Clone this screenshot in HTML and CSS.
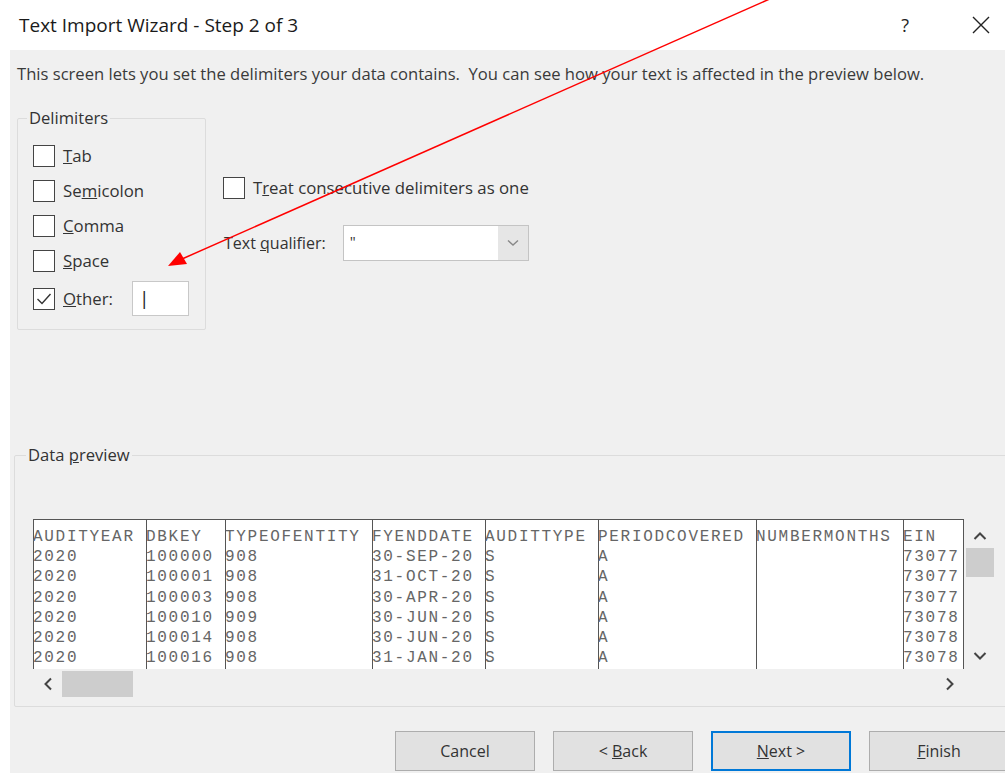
FILE: index.html
```html
<!DOCTYPE html>
<html lang="en">
<head>
<meta charset="utf-8">
<title>Text Import Wizard - Step 2 of 3</title>
<link rel="stylesheet" href="styles.css">
</head>
<body>
<div class="window">
  <header class="titlebar">
    <h1 class="title">Text Import Wizard - Step 2 of 3</h1>
    <div class="caption-buttons">
      <span class="help">?</span>
      <svg class="close" width="18" height="18" viewBox="0 0 18 18"><path d="M1 1 L17 17 M17 1 L1 17" stroke="#222" stroke-width="1.4" fill="none"/></svg>
    </div>
  </header>

  <main class="panel">
    <p class="intro">This screen lets you set the delimiters your data contains.&nbsp; You can see how your text is affected in the preview below.</p>

    <div class="options">
      <fieldset class="group delimiters">
        <legend>Delimiters</legend>
        <div class="check-list">
          <div class="check"><span class="box"></span><span><u>T</u>ab</span></div>
          <div class="check"><span class="box"></span><span>Se<u>m</u>icolon</span></div>
          <div class="check"><span class="box"></span><span><u>C</u>omma</span></div>
          <div class="check"><span class="box"></span><span><u>S</u>pace</span></div>
          <div class="check other">
            <span class="box"><svg width="20" height="20" viewBox="0 0 20 20"><path d="M3.5 10 L8 14.5 L16.5 5" stroke="#333" stroke-width="1.4" fill="none"/></svg></span>
            <span><u>O</u>ther:</span>
            <span class="textbox">|</span>
          </div>
        </div>
      </fieldset>

      <div class="side-options">
        <div class="check"><span class="box"></span><span>T<u>r</u>eat consecutive delimiters as one</span></div>
        <div class="qualifier">
          <span>Text <u>q</u>ualifier:</span>
          <div class="combo">
            <span class="combo-value">"</span>
            <span class="combo-drop"><svg width="12" height="8" viewBox="0 0 12 8"><path d="M1 1.5 L6 6 L11 1.5" stroke="#888" stroke-width="1.4" fill="none"/></svg></span>
          </div>
        </div>
      </div>
    </div>

    <fieldset class="group preview">
      <legend>Data <u>p</u>review</legend>
      <div class="preview-body">
        <div class="grid-row">
          <div class="grid">
            <div class="col" style="width:113px"><span>AUDITYEAR</span><span>2020</span><span>2020</span><span>2020</span><span>2020</span><span>2020</span><span>2020</span></div>
            <div class="col" style="width:79px"><span>DBKEY</span><span>100000</span><span>100001</span><span>100003</span><span>100010</span><span>100014</span><span>100016</span></div>
            <div class="col" style="width:147px"><span>TYPEOFENTITY</span><span>908</span><span>908</span><span>908</span><span>909</span><span>908</span><span>908</span></div>
            <div class="col" style="width:113px"><span>FYENDDATE</span><span>30-SEP-20</span><span>31-OCT-20</span><span>30-APR-20</span><span>30-JUN-20</span><span>30-JUN-20</span><span>31-JAN-20</span></div>
            <div class="col" style="width:113px"><span>AUDITTYPE</span><span>S</span><span>S</span><span>S</span><span>S</span><span>S</span><span>S</span></div>
            <div class="col" style="width:158px"><span>PERIODCOVERED</span><span>A</span><span>A</span><span>A</span><span>A</span><span>A</span><span>A</span></div>
            <div class="col" style="width:147px"><span>NUMBERMONTHS</span><span></span><span></span><span></span><span></span><span></span><span></span></div>
            <div class="col" style="width:60px"><span>EIN</span><span>73077</span><span>73077</span><span>73077</span><span>73078</span><span>73078</span><span>73078</span></div>
            <div class="col" style="width:60px"><span></span></div>
          </div>
          <div class="vscroll">
            <svg width="14" height="10" viewBox="0 0 14 10"><path d="M1.5 8 L7 2.5 L12.5 8" stroke="#444" stroke-width="2" fill="none"/></svg>
            <span class="vthumb"></span>
            <span class="vspace"></span>
            <svg width="14" height="10" viewBox="0 0 14 10"><path d="M1.5 2 L7 7.5 L12.5 2" stroke="#444" stroke-width="2" fill="none"/></svg>
          </div>
        </div>
        <div class="hscroll">
          <span class="harrow"><svg width="10" height="14" viewBox="0 0 10 14"><path d="M8 1.5 L2.5 7 L8 12.5" stroke="#444" stroke-width="2" fill="none"/></svg></span>
          <span class="hthumb"></span>
          <span class="hspace"></span>
          <span class="harrow"><svg width="10" height="14" viewBox="0 0 10 14"><path d="M2 1.5 L7.5 7 L2 12.5" stroke="#444" stroke-width="2" fill="none"/></svg></span>
        </div>
      </div>
    </fieldset>

    <div class="buttons">
      <button class="btn">Cancel</button>
      <button class="btn">&lt; <u>B</u>ack</button>
      <button class="btn default"><u>N</u>ext &gt;</button>
      <button class="btn"><u>F</u>inish</button>
    </div>
  </main>

  <svg class="callout" width="1005" height="773" viewBox="0 0 1005 773">
    <line x1="790" y1="-10" x2="182" y2="259" stroke="#ff0000" stroke-width="1.5"/>
    <polygon points="168,266 187,264 180,252" fill="#ff0000"/>
  </svg>
</div>
</body>
</html>
```

FILE: styles.css
```css
* { box-sizing: border-box; }

html, body {
  margin: 0;
  padding: 0;
  background: #ffffff;
}

body {
  font-family: "Open Sans", "Noto Sans", sans-serif;
  color: #333;
  width: 1005px;
  height: 773px;
  overflow: hidden;
}

.window {
  position: relative;
  width: 1005px;
  height: 773px;
}

/* Title bar */
.titlebar {
  height: 50px;
  display: flex;
  align-items: center;
  justify-content: space-between;
  padding: 0 15px 0 19px;
}

.title {
  margin: 0;
  font-size: 19px;
  font-weight: 400;
  color: #1a1a1a;
  line-height: 24px;
}

.caption-buttons {
  display: flex;
  align-items: center;
  gap: 63px;
}

.help {
  font-size: 18px;
  color: #222;
}

/* Dialog body */
.panel {
  margin-left: 10px;
  height: 723px;
  background: #f0f0f0;
  padding: 14px 0 0 7px;
  overflow: hidden;
  font-size: 16.6px;
}

.intro {
  margin: 0;
  line-height: 20px;
  color: #3a3a3a;
}

.options {
  display: flex;
  align-items: flex-start;
  margin-top: 24px;
}

.group {
  border: 1px solid #dcdcdc;
  border-radius: 2px;
  margin: 0;
  padding: 0;
  min-width: 0;
}

.group legend {
  padding: 0 2px;
  margin-left: 9px;
  line-height: 20px;
  font-size: 16.6px;
  color: #333;
}

.delimiters {
  width: 189px;
}

.check-list {
  padding: 17px 0 13px 15px;
  display: flex;
  flex-direction: column;
  gap: 13px;
}

.check {
  display: flex;
  align-items: center;
  gap: 8px;
  height: 22px;
  font-size: 16.8px;
  line-height: 22px;
  color: #333;
}

.box {
  width: 22px;
  height: 22px;
  border: 1px solid #444;
  background: #fff;
  display: flex;
  align-items: center;
  justify-content: center;
  flex: none;
}

.check.other {
  height: 35px;
  margin-top: -4px;
}

.textbox {
  margin-left: 11px;
  width: 57px;
  height: 35px;
  background: #fff;
  border: 1px solid #c8c8c8;
  padding-left: 6px;
  font-size: 19px;
  line-height: 32px;
  color: #222;
}

.side-options {
  margin-left: 17px;
  padding-top: 69px;
  display: flex;
  flex-direction: column;
  gap: 26px;
}

.qualifier {
  display: flex;
  align-items: center;
  gap: 17px;
  font-size: 16px;
  color: #333;
  padding-left: 1px;
}

.combo {
  width: 186px;
  height: 36px;
  display: flex;
  background: #fff;
  border: 1px solid #c4c4c4;
}

.combo-value {
  flex: 1;
  padding-left: 6px;
  line-height: 30px;
  font-size: 15px;
}

.combo-drop {
  width: 30px;
  background: #e6e6e6;
  display: flex;
  align-items: center;
  justify-content: center;
}

/* Data preview */
.preview {
  margin: 115px 0 0 -3px;
  width: 1010px;
}

.preview legend {
  margin-left: 11px;
}

.preview-body {
  padding: 54px 0 7px 18px;
}

.grid-row {
  display: flex;
  height: 150px;
}

.grid {
  width: 931px;
  height: 150px;
  display: flex;
  overflow: hidden;
  background: #fff;
  border-top: 1px solid #555;
  font-family: "Liberation Mono", "DejaVu Sans Mono", monospace;
  font-size: 16px;
  letter-spacing: 1.7px;
  color: #666;
  line-height: 20.2px;
}

.col {
  flex: none;
  display: flex;
  flex-direction: column;
  padding-top: 7px;
  box-shadow: inset 1px 0 #555;
  white-space: nowrap;
  overflow: hidden;
}

.col span {
  height: 20.2px;
}

.vscroll {
  width: 31px;
  display: flex;
  flex-direction: column;
  align-items: center;
  padding-top: 12px;
}

.vthumb {
  width: 28px;
  height: 29px;
  margin-top: 7px;
  margin-left: 1px;
  background: #cdcdcd;
}

.vspace { flex: 1; }

.vscroll svg:last-child { margin-bottom: 8px; }

.hscroll {
  width: 931px;
  height: 30px;
  display: flex;
  align-items: center;
}

.harrow {
  width: 29px;
  display: flex;
  justify-content: center;
}

.hthumb {
  width: 71px;
  height: 26px;
  background: #cdcdcd;
}

.hspace { flex: 1; }

/* Command buttons */
.buttons {
  display: flex;
  gap: 18px;
  margin: 24px 0 0 378px;
}

.btn {
  flex: none;
  width: 140px;
  height: 40px;
  background: #e1e1e1;
  border: 1px solid #adadad;
  font-family: inherit;
  font-size: 16px;
  color: #333;
  padding: 0;
}

.btn.default {
  border: 2px solid #0078d7;
}

/* Red callout arrow drawn over the dialog */
.callout {
  position: absolute;
  left: 0;
  top: 0;
  pointer-events: none;
}
```
